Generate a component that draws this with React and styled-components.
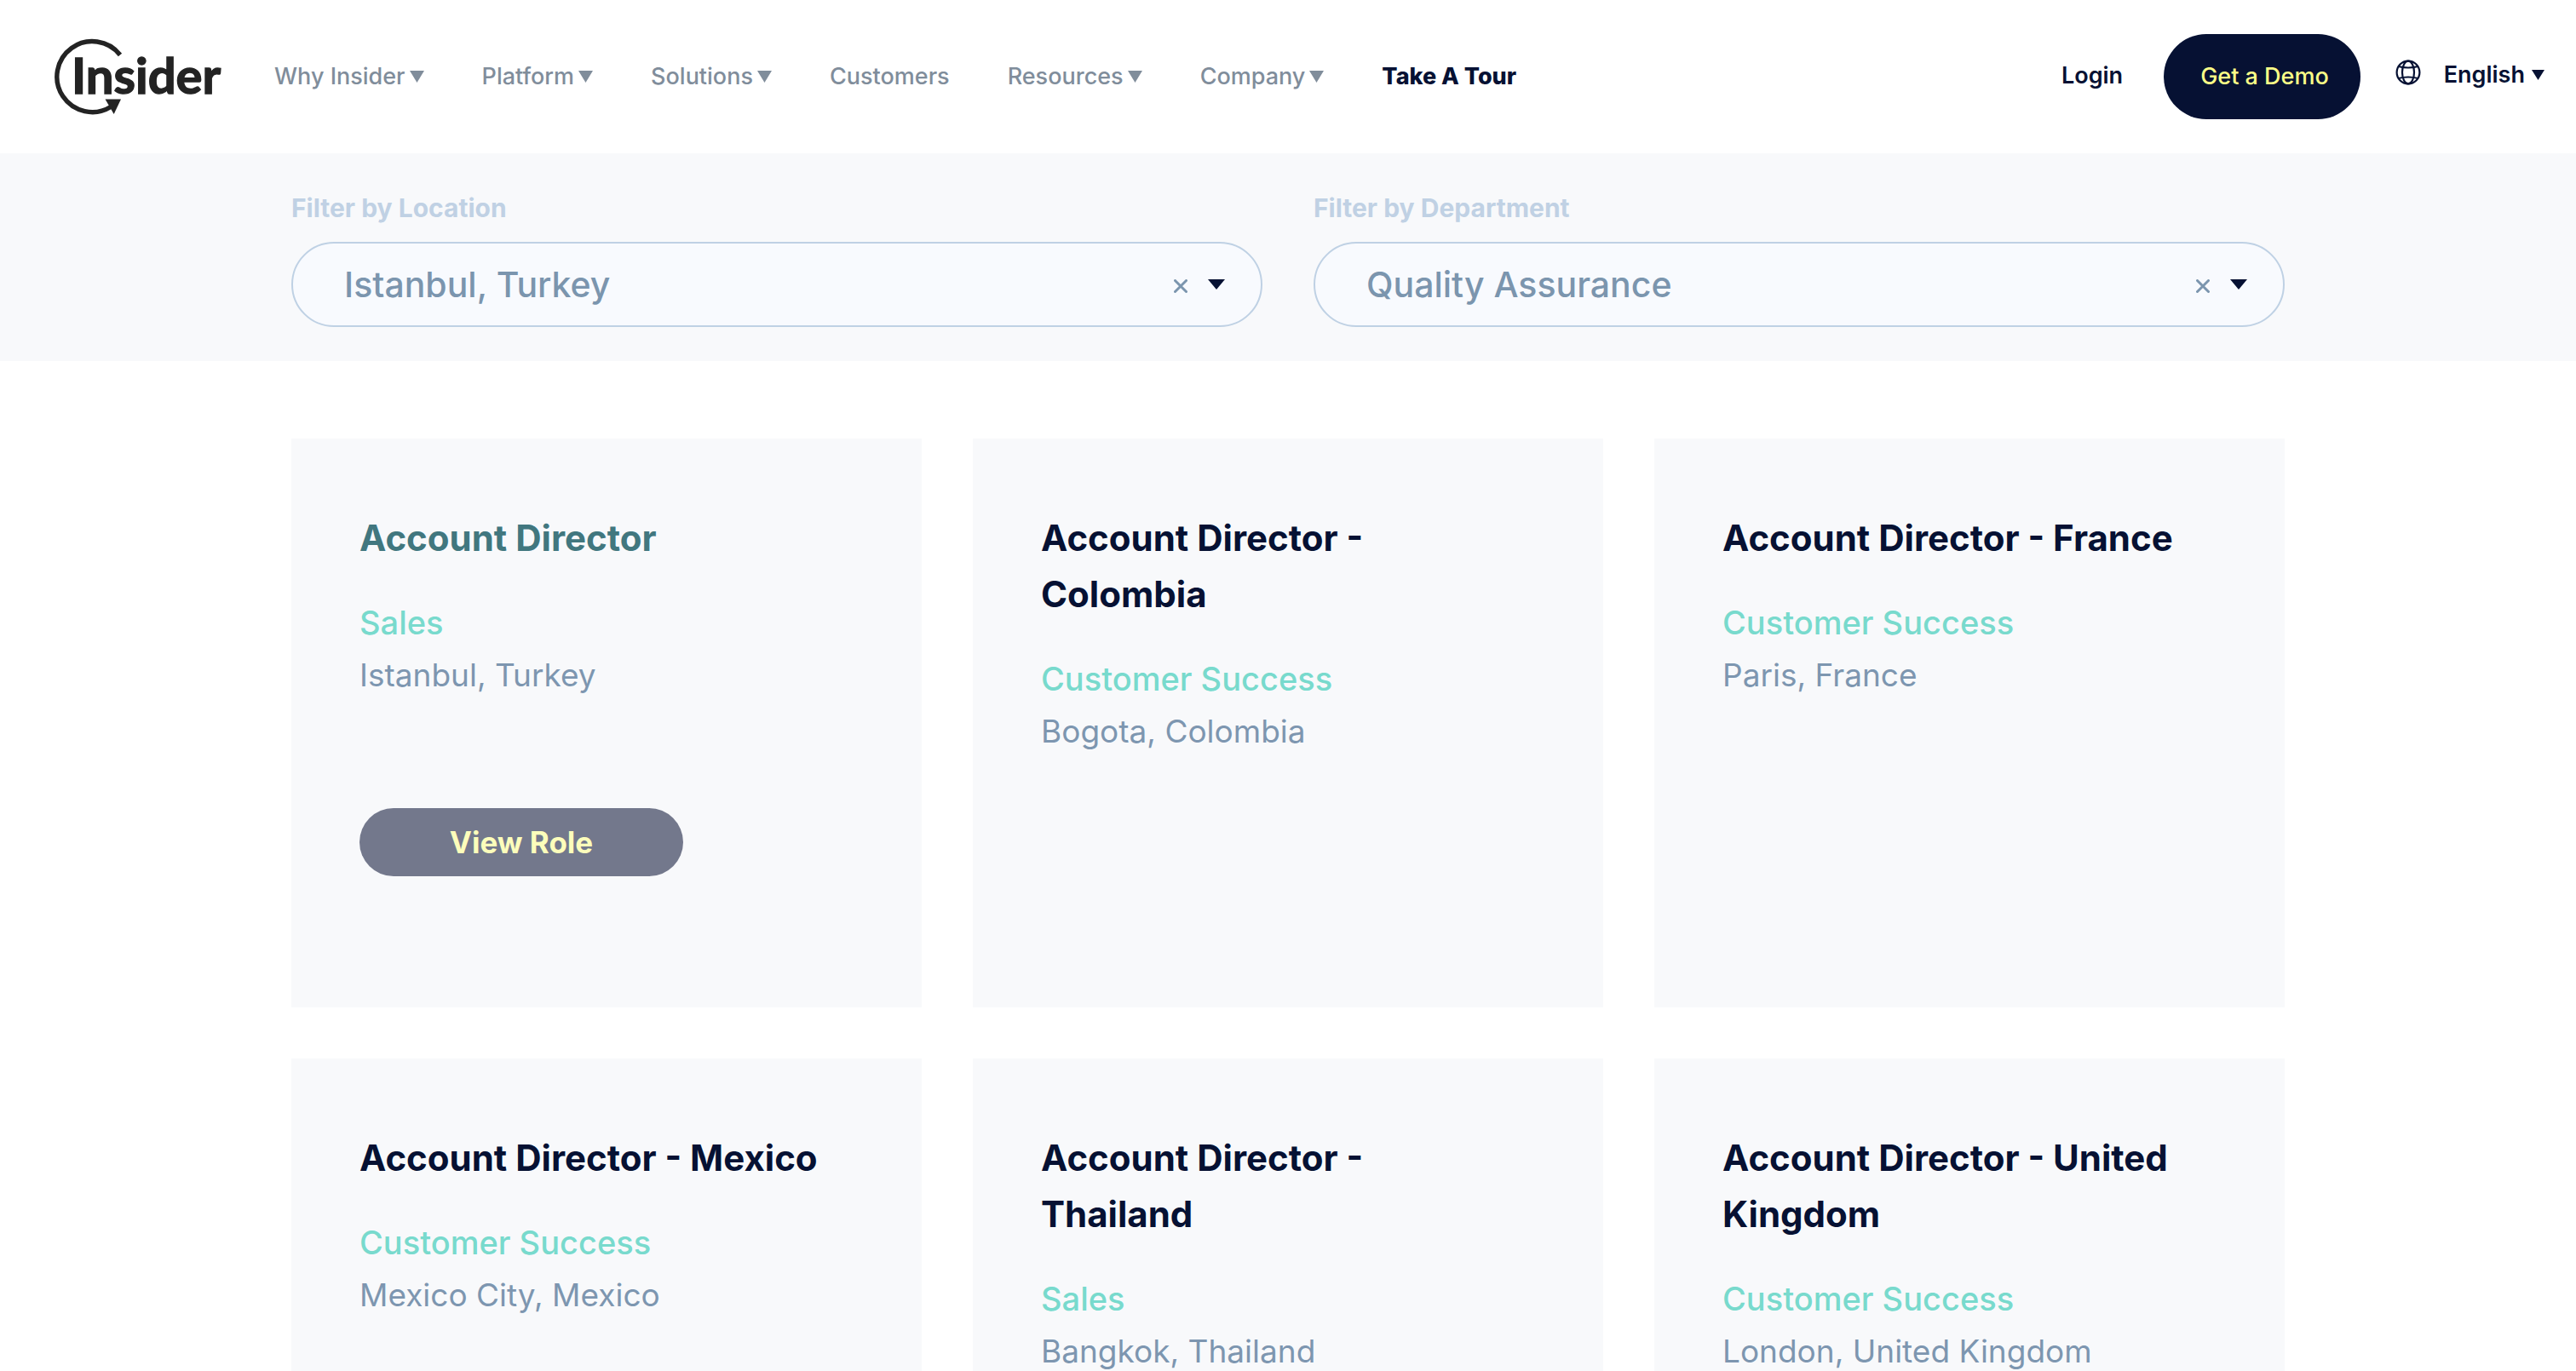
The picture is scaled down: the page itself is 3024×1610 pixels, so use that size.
import React, { useState } from "react";
import styled, { createGlobalStyle } from "styled-components";

const GlobalStyle = createGlobalStyle`
  *, *::before, *::after { box-sizing: border-box; }
  body { margin: 0; background: #fff; }
  button, select { font: inherit; color: inherit; }
`;

const navy = "#061133";

const Page = styled.div`
  height: 100vh;
  overflow-y: auto;
  scrollbar-width: none;
  font-family: Inter, "Open Sans", "Liberation Sans", sans-serif;
  color: ${navy};
`;

const Header = styled.header`
  display: flex;
  align-items: center;
  height: 180px;
  padding: 0 37px 0 64px;
  font-size: 27px;
  line-height: 40px;
`;

const LogoLink = styled.a`
  display: flex;
  margin-right: 60px;
`;

const LogoSvg = styled.svg`
  display: block;
  width: 198px;
  height: 90px;
  text {
    font-family: Lato, "Open Sans", sans-serif;
    font-size: 58px;
    font-weight: 700;
    fill: #232323;
    stroke: #232323;
    stroke-width: 1.4;
  }
`;

const Nav = styled.nav`
  display: flex;
  align-items: center;
  gap: 68px;
`;

const NavButton = styled.button`
  display: flex;
  align-items: center;
  gap: 5px;
  padding: 0;
  border: 0;
  background: none;
  color: #808d9b;
  font-weight: 500;
  cursor: pointer;
  white-space: nowrap;
`;

const NavLink = styled.a`
  color: ${(p) => (p.$strong ? navy : "#808d9b")};
  font-weight: ${(p) => (p.$strong ? 800 : 500)};
  text-decoration: none;
  white-space: nowrap;
`;

const Triangle = styled.svg`
  display: block;
  flex: none;
  width: ${(p) => p.$width}px;
  height: ${(p) => p.$height}px;
  fill: currentColor;
`;

const Actions = styled.div`
  display: flex;
  align-items: center;
  margin-left: auto;
  font-weight: 600;
`;

const LoginLink = styled.a`
  margin-right: 48px;
  padding-bottom: 2px;
  color: inherit;
  text-decoration: none;
`;

const DemoButton = styled.button`
  height: 100px;
  margin-right: 41px;
  padding: 0 37px 0 43px;
  border: 0;
  border-radius: 50px;
  background: ${navy};
  color: #fbff87;
  font-weight: 500;
  cursor: pointer;
  white-space: nowrap;
`;

const Language = styled.label`
  display: flex;
  align-items: center;
  padding-bottom: 4px;
`;

const Globe = styled.svg`
  display: block;
  width: 30px;
  height: 36px;
  margin: 0 27px 4px 0;
  fill: none;
  stroke: ${navy};
  stroke-width: 2.2;
`;

const LanguageSelect = styled.select`
  appearance: none;
  field-sizing: content;
  margin-right: 8px;
  padding: 0;
  border: 0;
  background: none;
  cursor: pointer;
`;

const FilterBand = styled.section`
  padding: 40px 0;
  background: #f8f9fb;
`;

const Container = styled.div`
  max-width: 2340px;
  margin: 0 auto;
`;

const FilterGrid = styled(Container)`
  display: grid;
  grid-template-columns: 1fr 1fr;
  gap: 60px;
`;

const Field = styled.div`
  display: flex;
  flex-direction: column;
  gap: 16px;
`;

const FieldLabel = styled.label`
  color: #c0d1e4;
  font-size: 30px;
  font-weight: 700;
  line-height: 48px;
`;

const Pill = styled.div`
  display: flex;
  align-items: center;
  height: 100px;
  padding: 0 42px 0 60px;
  border: 2px solid #bfd1e4;
  border-radius: 50px;
  background: #f8fafe;
`;

const FieldSelect = styled.select`
  flex: 1;
  min-width: 0;
  height: 100%;
  appearance: none;
  padding: 0;
  border: 0;
  background: none;
  color: #7b95ae;
  font-size: 41px;
  font-weight: 500;
`;

const ClearButton = styled.button`
  display: flex;
  margin-right: 24px;
  padding: 4px 0 0;
  border: 0;
  background: none;
  cursor: pointer;
  svg {
    display: block;
    width: 16px;
    height: 16px;
    stroke: #7b95ae;
    stroke-width: 3;
    stroke-linecap: round;
  }
`;

const JobGrid = styled(Container)`
  display: grid;
  grid-template-columns: repeat(3, 1fr);
  gap: 60px;
  padding: 91px 0;
`;

const Card = styled.article`
  min-height: 668px;
  padding: 84px 100px 84px 80px;
  background: #f8f9fb;
`;

const JobTitle = styled.h2`
  margin: 0 0 35px;
  color: ${(p) => (p.$active ? "#41777f" : navy)};
  font-size: 42px;
  font-weight: 700;
  line-height: 66px;
`;

const Meta = styled.p`
  margin: 0;
  color: ${(p) => (p.$accent ? "#78dacd" : "#7d96b0")};
  font-size: ${(p) => (p.$accent ? 38 : 37)}px;
  font-weight: ${(p) => (p.$accent ? 500 : 400)};
  line-height: 62px;
`;

const RoleLink = styled.a`
  display: flex;
  align-items: center;
  justify-content: center;
  width: 380px;
  height: 80px;
  margin-top: 125px;
  border-radius: 40px;
  background: #73788c;
  color: #fcfdbb;
  font-size: 35px;
  font-weight: 700;
  text-decoration: none;
`;

const menu = [
  { label: "Why Insider", dropdown: true },
  { label: "Platform", dropdown: true },
  { label: "Solutions", dropdown: true },
  { label: "Customers" },
  { label: "Resources", dropdown: true },
  { label: "Company", dropdown: true },
  { label: "Take A Tour", strong: true },
];

const jobs = [
  { title: "Account Director", team: "Sales", place: "Istanbul, Turkey", active: true },
  { title: "Account Director - Colombia", team: "Customer Success", place: "Bogota, Colombia" },
  { title: "Account Director - France", team: "Customer Success", place: "Paris, France" },
  { title: "Account Director - Mexico", team: "Customer Success", place: "Mexico City, Mexico" },
  { title: "Account Director - Thailand", team: "Sales", place: "Bangkok, Thailand" },
  { title: "Account Director - United Kingdom", team: "Customer Success", place: "London, United Kingdom" },
];

function Caret({ width, height }) {
  return (
    <Triangle $width={width} $height={height} viewBox="0 0 10 10" preserveAspectRatio="none" aria-hidden="true">
      <path d="M0 0H10L5 10Z" />
    </Triangle>
  );
}

function Logo() {
  return (
    <LogoSvg viewBox="64 45 198 90" role="img" aria-label="Insider">
      <path d="M141 64.5A41.5 41.5 0 1 0 130 125.5" fill="none" stroke="#232323" strokeWidth="5.4" />
      <path d="M123.5 116.5H142L133.7 134Z" fill="#232323" />
      <text x="84" y="110">Insider</text>
    </LogoSvg>
  );
}

function Filter({ id, label, options }) {
  const [value, setValue] = useState(options[0]);
  return (
    <Field>
      <FieldLabel htmlFor={id}>{label}</FieldLabel>
      <Pill>
        <FieldSelect id={id} value={value} onChange={(e) => setValue(e.target.value)}>
          <option value="" hidden />
          {options.map((o) => (
            <option key={o}>{o}</option>
          ))}
        </FieldSelect>
        <ClearButton type="button" aria-label={`Clear ${label}`} onClick={() => setValue("")}>
          <svg viewBox="0 0 16 16">
            <path d="M1.5 1.5L14.5 14.5M14.5 1.5L1.5 14.5" />
          </svg>
        </ClearButton>
        <Caret width={20} height={12} />
      </Pill>
    </Field>
  );
}

export default function App() {
  return (
    <Page>
      <GlobalStyle />
      <Header>
        <LogoLink href="#">
          <Logo />
        </LogoLink>
        <Nav>
          {menu.map((item) =>
            item.dropdown ? (
              <NavButton key={item.label} type="button">
                {item.label}
                <Caret width={17} height={14} />
              </NavButton>
            ) : (
              <NavLink key={item.label} href="#" $strong={item.strong}>
                {item.label}
              </NavLink>
            )
          )}
        </Nav>
        <Actions>
          <LoginLink href="#">Login</LoginLink>
          <DemoButton type="button">Get a Demo</DemoButton>
          <Language>
            <Globe viewBox="0 0 30 36" aria-hidden="true">
              <circle cx="15" cy="17" r="13.4" />
              <ellipse cx="15" cy="17" rx="7" ry="13.4" />
              <path d="M3.5 10Q15 13 26.5 10M3.5 24Q15 21 26.5 24" />
            </Globe>
            <LanguageSelect aria-label="Language" defaultValue="English">
              <option>English</option>
            </LanguageSelect>
            <Caret width={15} height={12} />
          </Language>
        </Actions>
      </Header>
      <FilterBand>
        <FilterGrid>
          <Filter id="location" label="Filter by Location" options={["Istanbul, Turkey"]} />
          <Filter id="department" label="Filter by Department" options={["Quality Assurance"]} />
        </FilterGrid>
      </FilterBand>
      <JobGrid as="main">
        {jobs.map((job) => (
          <Card key={job.title}>
            <JobTitle $active={job.active}>{job.title}</JobTitle>
            <Meta $accent>{job.team}</Meta>
            <Meta>{job.place}</Meta>
            {job.active && <RoleLink href="#">View Role</RoleLink>}
          </Card>
        ))}
      </JobGrid>
    </Page>
  );
}
